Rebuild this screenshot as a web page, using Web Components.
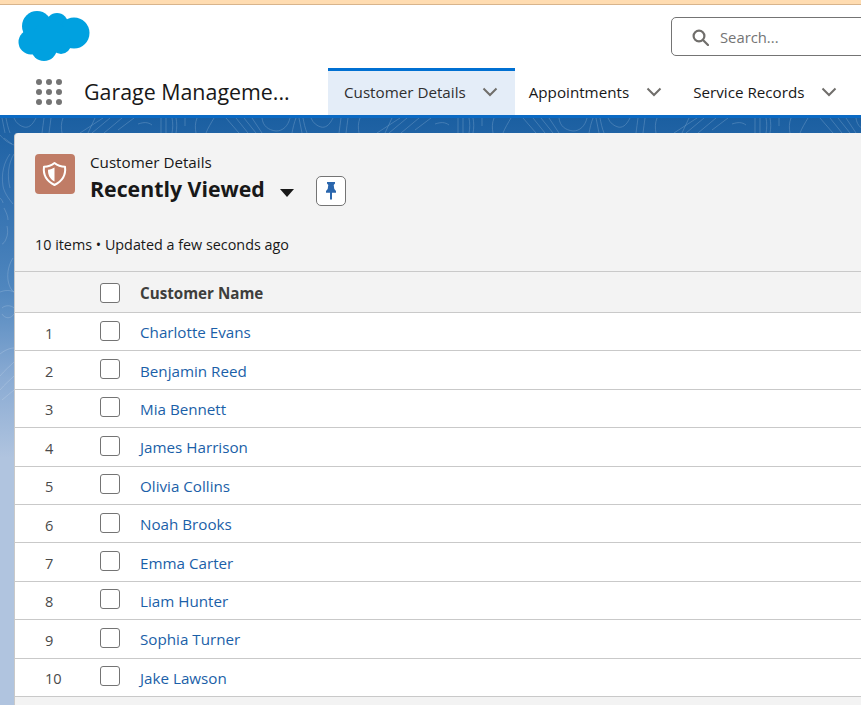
<!DOCTYPE html>
<html lang="en">
<head>
<meta charset="utf-8">
<title>Customer Details</title>
<style>
  html, body { margin: 0; height: 100%; overflow: hidden; }
  body { width: 861px; height: 705px; font-family: "Open Sans", "Liberation Sans", sans-serif; display: flex; flex-direction: column; background: #fff; }
</style>
</head>
<body>
<app-header></app-header>
<page-stage>
  <list-card title-text="Recently Viewed" object-name="Customer Details" status="10 items • Updated a few seconds ago">
    <list-row num="1" name="Charlotte Evans"></list-row>
    <list-row num="2" name="Benjamin Reed"></list-row>
    <list-row num="3" name="Mia Bennett"></list-row>
    <list-row num="4" name="James Harrison"></list-row>
    <list-row num="5" name="Olivia Collins"></list-row>
    <list-row num="6" name="Noah Brooks"></list-row>
    <list-row num="7" name="Emma Carter"></list-row>
    <list-row num="8" name="Liam Hunter"></list-row>
    <list-row num="9" name="Sophia Turner"></list-row>
    <list-row num="10" name="Jake Lawson"></list-row>
  </list-card>
</page-stage>

<script>
// Small chevron shared by the nav tabs
const chevron = `<svg width="16" height="16" viewBox="0 0 16 16" fill="none" stroke="#706e6b" stroke-width="2"><path d="M1.500 4.500 8 11l6.500-6.500"/></svg>`;

// Top bar: warning strip, logo, search and tabs
customElements.define('app-header', class extends HTMLElement {
  constructor() {
    super();
    this.attachShadow({ mode: 'open' });
    this.shadowRoot.innerHTML = `
      <style>
        :host { display: block; flex: none; background: #fff; color: #181818; }
        .strip { height: 4px; background: #ffdcb1; border-bottom: 1px solid #d8b48c; }
        .top { height: 63px; display: flex; justify-content: space-between; padding-left: 18px; box-sizing: border-box; }
        .logo { margin-top: 6px; }
        .search {
          margin: 12px -30px 0 0; width: 220px; height: 39px; box-sizing: border-box;
          border: 1px solid #747474; border-radius: 5px; display: flex; align-items: center;
          padding: 1px 0 0 20px; gap: 11px; color: #747474; font-size: 14.8px;
        }
        nav { height: 47px; display: flex; align-items: stretch; }
        .launcher { width: 84px; flex: none; box-sizing: border-box; padding: 11px 0 0 36px; }
        .launcher svg { display: block; }
        .app { width: 244px; flex: none; font-size: 21.4px; line-height: 48px; white-space: nowrap; }
      </style>
      <div class="strip"></div>
      <div class="top">
        <svg class="logo" width="72" height="50" viewBox="0 0 72 50">
          <g fill="#00a1e0">
            <circle cx="19" cy="15" r="15"/><circle cx="39" cy="13" r="11"/><circle cx="56" cy="22" r="15.500"/>
            <circle cx="13" cy="31" r="12.500"/><circle cx="26" cy="37" r="13"/><circle cx="43" cy="33" r="10"/>
            <circle cx="32" cy="25" r="16"/>
          </g>
        </svg>
        <div class="search">
          <svg width="17" height="17" viewBox="0 0 17 17" fill="none" stroke="#706e6b" stroke-width="2.200"><circle cx="7" cy="7" r="5.400"/><path d="m11 11 5 5" stroke-linecap="round"/></svg>
          <span>Search...</span>
        </div>
      </div>
      <nav>
        <div class="launcher">
          <svg width="26" height="26" viewBox="0 0 26 26" fill="#747474">
            <circle cx="3" cy="3" r="3"/><circle cx="13" cy="3" r="3"/><circle cx="23" cy="3" r="3"/>
            <circle cx="3" cy="13" r="3"/><circle cx="13" cy="13" r="3"/><circle cx="23" cy="13" r="3"/>
            <circle cx="3" cy="23" r="3"/><circle cx="13" cy="23" r="3"/><circle cx="23" cy="23" r="3"/>
          </svg>
        </div>
        <div class="app">Garage Manageme...</div>
        <nav-tab active label="Customer Details"></nav-tab>
        <nav-tab label="Appointments"></nav-tab>
        <nav-tab label="Service Records"></nav-tab>
      </nav>
    `;
  }
});

// One tab in the navigation row
customElements.define('nav-tab', class extends HTMLElement {
  constructor() {
    super();
    this.attachShadow({ mode: 'open' });
    const active = this.hasAttribute('active');
    this.shadowRoot.innerHTML = `
      <style>
        :host { display: block; flex: none; }
        .tab {
          height: 47px; box-sizing: border-box; display: flex; align-items: center; gap: 17px;
          font-size: 15.200px; color: #181818; white-space: nowrap;
          padding: 0 17px 2px 14px; border-top: 3px solid transparent;
        }
        .tab.active { background: #e4edf8; border-top-color: #0070d2; padding-left: 16px; gap: 16px; color: #2f2f2f; }
      </style>
      <div class="tab ${active ? 'active' : ''}"><span>${this.getAttribute('label')}</span>${chevron}</div>
    `;
  }
});

// Blue patterned background below the header
customElements.define('page-stage', class extends HTMLElement {
  constructor() {
    super();
    this.attachShadow({ mode: 'open' });
    // The contour strip above the card, repeated across the width
    let lines = '';
    for (const x of [0, 297, 594]) {
      lines += `<g transform="translate(${x} 0)">
        <path d="M2 0c1 5 2 10 3 15M6 0c1 5 2 10 4 15M14 0c2 5 6 8 10 9s8-1 12-9M44 0c-1 5-1 10-2 15M51 0c-1 5-1 10-2 15M63 0c-2 5-2 10-1 15"/>
        <path d="M103 0 80 15M95 0 88 15M110 0 92 15M122 0 104 15M134 0l-16 12M138 6c6-2 10-2 14 1"/>
        <path d="M161 0v15M166 0v15M172 0c1 5 1 10 0 15M176 0c1 5 1 10 0 15M185 0v8M197 0c-2 5-2 10-1 15M214 0c-3 5-6 10-8 15"/>
        <path d="M226 0l13 15M236 0l12 15M244 0l12 15M252 0l10 15M262 0c1 8 6 12 14 13 7 0 12-5 14-13M296 0c-2 5-3 10-4 15"/>
      </g>`;
    }
    this.shadowRoot.innerHTML = `
      <style>
        :host {
          display: block; flex: 1; min-height: 0; position: relative; overflow: hidden;
          border-top: 3px solid #0b6ac4; padding: 15px 0 0 14px;
          background: linear-gradient(#1b5fa1 0, #2c6cad 60px, #4f86be 170px, #8aabd3 260px, #b0c4df 340px, #b0c4df 100%);
        }
        svg.pattern { position: absolute; left: 0; top: 0; }
      </style>
      <svg class="pattern" width="861" height="15" fill="none" stroke="#5d8fc0" stroke-opacity=".6">${lines}</svg>
      <svg class="pattern" width="14" height="400" fill="none" stroke="#ffffff" stroke-opacity=".16">
        <path d="M0 17c4 5 8 8 14 10M4 20l8 6M10 36c-6 8-9 20-7 32 1 6 5 12 10 18M14 36c-6 10-7 22-4 34M0 80c2 2 3 4 3 5M4 90c2 4 4 8 4 12M7 108c1 4 1 9-1 13 -1 3-3 5-4 5M13 140c-4 6-6 14-5 22 1 6 3 10 6 12M0 174c5-2 10-2 14 0M2 190c3-3 9-3 12 0M2 196c3 5 9 5 12 0M0 236c5-4 10-6 14-6M0 258c5-6 10-10 14-14M0 272c5-6 10-10 14-14M2 282l12-10"/>
      </svg>
      <slot></slot>
    `;
  }
});

// The list view card: header block plus table
customElements.define('list-card', class extends HTMLElement {
  constructor() {
    super();
    this.attachShadow({ mode: 'open' });
    this.shadowRoot.innerHTML = `
      <style>
        :host {
          display: block; position: relative; width: 900px; height: 620px; background: #f3f3f3;
          border-left: 1px solid #c9c9c9; border-radius: 4px 0 0 0; color: #181818;
        }
        .head { height: 138px; box-sizing: border-box; padding: 21px 0 0 20px; }
        .title-row { display: flex; gap: 15px; }
        .icon { width: 40px; height: 40px; border-radius: 4px; background: #c07c66; flex: none; }
        .icon svg { display: block; }
        .object { font-size: 15.200px; line-height: 20px; margin-top: -2px; }
        .title-line { display: flex; align-items: flex-start; margin-top: 2px; }
        h1 { margin: 0; font-size: 21.300px; line-height: 30px; font-weight: 700; white-space: nowrap; }
        .caret { margin: 15px 0 0 15px; width: 0; height: 0; border: 7px solid transparent; border-top: 8px solid #181818; border-bottom: 0; }
        .pin {
          margin: 2px 0 0 22px; width: 30px; height: 30px; box-sizing: border-box;
          border: 1px solid #747474; border-radius: 5px; background: #fff;
          display: flex; align-items: center; justify-content: center;
        }
        .status { font-size: 14.350px; line-height: 20px; margin-top: 29px; }
        .col {
          height: 42px; box-sizing: border-box; border-top: 1px solid #c9c9c9; border-bottom: 1px solid #c9c9c9;
          display: flex; align-items: center; padding: 1px 0 0 85px; font-size: 15.200px; font-weight: 700; color: #3e3e3c;
        }
        .box { width: 20px; height: 20px; box-sizing: border-box; border: 1px solid #747474; border-radius: 3px; background: #fff; margin-right: 20px; }
      </style>
      <div class="head">
        <div class="title-row">
          <div class="icon">
            <svg width="40" height="40" viewBox="0 0 40 40">
              <path d="M19.500 9c3 2.500 6.500 3.700 10.500 3.700 1 8-1.500 14-10.500 18.300C10.500 26.700 8 20.700 9 12.700c4 0 7.500-1.200 10.500-3.700z" fill="none" stroke="#fff" stroke-width="2" stroke-linejoin="round"/>
              <path d="M19.500 13.500c-2 1.200-4 1.900-6.500 2.200-.2 4.800 1.500 9 6.500 11.800z" fill="#fff"/>
            </svg>
          </div>
          <div>
            <div class="object">${this.getAttribute('object-name')}</div>
            <div class="title-line">
              <h1>${this.getAttribute('title-text')}</h1>
              <span class="caret"></span>
              <span class="pin">
                <svg width="14" height="18" viewBox="0 0 14 18" fill="#2a66ad"><path d="M3 0h8v1.500L9.700 3l.6 4L12 9v1.800H8V17l-1 1-1-1v-6.200H2V9l1.700-2 .6-4L3 1.500z"/></svg>
              </span>
            </div>
          </div>
        </div>
        <div class="status">${this.getAttribute('status')}</div>
      </div>
      <div class="col"><span class="box"></span><span>Customer Name</span></div>
      <slot></slot>
    `;
  }
});

// Numbered row with a checkbox and linked name
customElements.define('list-row', class extends HTMLElement {
  constructor() {
    super();
    this.attachShadow({ mode: 'open' });
    this.shadowRoot.innerHTML = `
      <style>
        :host { display: flex; align-items: center; height: 38.400px; box-sizing: border-box; background: #fff; border-bottom: 1px solid #c9c9c9; font-size: 15.200px; }
        .num { width: 85px; box-sizing: border-box; padding-left: 30px; color: #4a4a4a; font-size: 14.600px; margin-top: 2px; }
        .box { width: 20px; height: 20px; box-sizing: border-box; border: 1px solid #747474; border-radius: 3px; background: #fff; margin: -2px 20px 0 0; }
        a { color: #1b5fa8; text-decoration: none; white-space: nowrap; margin-top: 1px; }
      </style>
      <span class="num">${this.getAttribute('num')}</span>
      <span class="box"></span>
      <a href="#">${this.getAttribute('name')}</a>
    `;
  }
});
</script>
</body>
</html>
